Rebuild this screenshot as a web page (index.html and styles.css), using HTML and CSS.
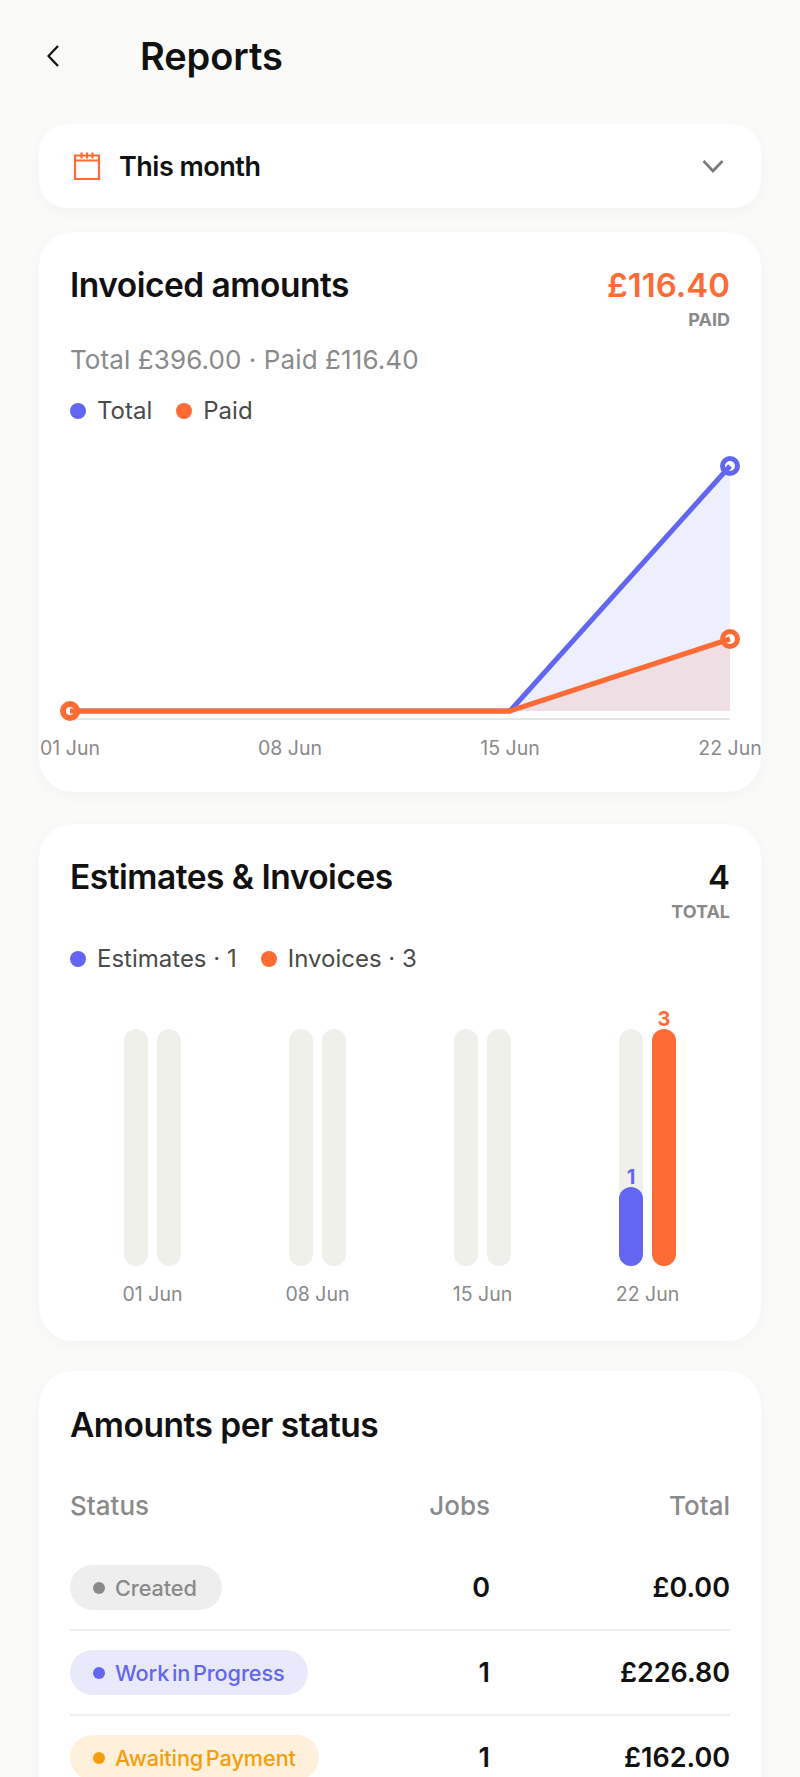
FILE: index.html
```html
<!DOCTYPE html>
<html lang="en">
<head>
    <meta charset="UTF-8">
    <meta name="viewport" content="width=device-width, initial-scale=1.0">
    <title>Reports</title>
    <link rel="stylesheet" href="styles.css">
</head>
<body>
    <div class="page">
        <header class="top-bar">
            <svg class="back-icon" width="12" height="22" viewBox="0 0 12 22">
                <path d="M11 1 1.500 11 11 21" fill="none" stroke="#111" stroke-width="2.200"/>
            </svg>
            <h1>Reports</h1>
        </header>

        <div class="period-select">
            <svg class="calendar-icon" width="28" height="30" viewBox="0 0 28 30">
                <path d="M2 4.500h24V28H2zM2 9.500h24M8.500 1.500v6M14 1.500v6M19.500 1.500v6" fill="none" stroke="#ff6b35" stroke-width="2.200"/>
            </svg>
            <span class="period-label">This month</span>
            <svg class="chevron-icon" width="22" height="14" viewBox="0 0 22 14">
                <path d="M1.500 2 11 12l9.500-10" fill="none" stroke="#7a7a7a" stroke-width="2.600"/>
            </svg>
        </div>

        <section class="card card-invoiced">
            <div class="card-head">
                <h2>Invoiced amounts</h2>
                <div class="head-value">
                    <div class="big-number orange">£116.40</div>
                    <div class="small-caption">PAID</div>
                </div>
            </div>
            <p class="summary">Total £396.00 · Paid £116.40</p>
            <div class="legend">
                <span class="legend-item"><i class="dot blue-bg"></i>Total</span>
                <span class="legend-item"><i class="dot orange-bg"></i>Paid</span>
            </div>
            <svg class="line-chart" width="660" height="314" viewBox="0 0 660 314">
                <path d="M440 277 660 32V277Z" fill="#eeeffd"/>
                <path d="M440 277 660 205V277Z" fill="#efdfe4"/>
                <path d="M0 285H660" stroke="#e6e6e6" stroke-width="2"/>
                <circle cx="660" cy="32" r="7.500" fill="#fff" stroke="#6366f1" stroke-width="5"/>
                <path d="M0 277H440L660 32" fill="none" stroke="#6366f1" stroke-width="5"/>
                <circle cx="0" cy="277" r="7" fill="#fff" stroke="#ff6b35" stroke-width="6"/>
                <circle cx="660" cy="205" r="7.500" fill="#fff" stroke="#ff6b35" stroke-width="5"/>
                <path d="M0 277H440L660 205" fill="none" stroke="#ff6b35" stroke-width="5"/>
                <text x="0" y="321" class="axis-label">01 Jun</text>
                <text x="220" y="321" class="axis-label">08 Jun</text>
                <text x="440" y="321" class="axis-label">15 Jun</text>
                <text x="660" y="321" class="axis-label">22 Jun</text>
            </svg>
        </section>

        <section class="card card-estimates">
            <div class="card-head">
                <h2>Estimates &amp; Invoices</h2>
                <div class="head-value">
                    <div class="big-number">4</div>
                    <div class="small-caption">TOTAL</div>
                </div>
            </div>
            <div class="legend legend-estimates">
                <span class="legend-item"><i class="dot blue-bg"></i>Estimates · 1</span>
                <span class="legend-item"><i class="dot orange-bg"></i>Invoices · 3</span>
            </div>
            <div class="bar-chart">
                <div class="bar-group">
                    <div class="bars"><div class="bar"></div><div class="bar"></div></div>
                    <div class="bar-label">01 Jun</div>
                </div>
                <div class="bar-group">
                    <div class="bars"><div class="bar"></div><div class="bar"></div></div>
                    <div class="bar-label">08 Jun</div>
                </div>
                <div class="bar-group">
                    <div class="bars"><div class="bar"></div><div class="bar"></div></div>
                    <div class="bar-label">15 Jun</div>
                </div>
                <div class="bar-group">
                    <div class="bars">
                        <div class="bar"><div class="bar-fill blue-bg" style="height: 33.3%"><span class="bar-count blue">1</span></div></div>
                        <div class="bar"><div class="bar-fill orange-bg" style="height: 100%"><span class="bar-count orange">3</span></div></div>
                    </div>
                    <div class="bar-label">22 Jun</div>
                </div>
            </div>
        </section>

        <section class="card card-status">
            <h2>Amounts per status</h2>
            <div class="status-row status-head">
                <div>Status</div>
                <div class="col-jobs">Jobs</div>
                <div class="col-total">Total</div>
            </div>
            <div class="status-row">
                <div><span class="pill pill-grey"><i class="pill-dot"></i>Created</span></div>
                <div class="col-jobs">0</div>
                <div class="col-total">£0.00</div>
            </div>
            <div class="status-row">
                <div><span class="pill pill-blue"><i class="pill-dot"></i>Work in Progress</span></div>
                <div class="col-jobs">1</div>
                <div class="col-total">£226.80</div>
            </div>
            <div class="status-row">
                <div><span class="pill pill-amber"><i class="pill-dot"></i>Awaiting Payment</span></div>
                <div class="col-jobs">1</div>
                <div class="col-total">£162.00</div>
            </div>
        </section>
    </div>
</body>
</html>
```

FILE: styles.css
```css
* {
    box-sizing: border-box;
}
html, body {
    margin: 0;
    padding: 0;
}
body {
    font-family: Inter, "Noto Sans", sans-serif;
    background-color: #fafaf8;
    color: #111111;
}
.page {
    height: 1777px;
    overflow: hidden;
    padding: 0 39px;
}
.top-bar {
    display: flex;
    align-items: center;
    height: 124px;
    padding: 0 0 12px 8px;
}
.back-icon {
    margin-right: 81px;
}
h1 {
    margin: 0;
    font-size: 38px;
    font-weight: 600;
    letter-spacing: -0.1px;
}
h2 {
    margin: 0;
    font-size: 33.500px;
    font-weight: 600;
    letter-spacing: -0.5px;
    line-height: 38px;
}
.period-select {
    display: flex;
    align-items: center;
    height: 84px;
    margin-bottom: 24px;
    padding: 0 37px 0 34px;
    background: #ffffff;
    border-radius: 28px;
    box-shadow: 0 4px 16px rgba(0, 0, 0, 0.03);
}
.calendar-icon {
    margin-right: 18px;
}
.period-label {
    flex: 1;
    font-size: 27px;
    font-weight: 600;
    letter-spacing: -0.5px;
}
.card {
    margin-bottom: 32px;
    padding: 34px 31px 0;
    background: #ffffff;
    border-radius: 34px;
    box-shadow: 0 4px 16px rgba(0, 0, 0, 0.03);
}
.card-invoiced {
    height: 560px;
}
.card-estimates {
    height: 517px;
    margin-bottom: 30px;
}
.card-status {
    height: 600px;
    padding-top: 35px;
}
.card-head {
    display: flex;
    justify-content: space-between;
}
.head-value {
    text-align: right;
}
.big-number {
    font-size: 33px;
    font-weight: 600;
    line-height: 38px;
}
.small-caption {
    margin-top: 5px;
    font-size: 18px;
    font-weight: 700;
    line-height: 22px;
    color: #8a8a8a;
}
.orange {
    color: #ff6b35;
}
.blue {
    color: #6366f1;
}
.orange-bg {
    background: #ff6b35;
}
.blue-bg {
    background: #6366f1;
}
.summary {
    margin: 13px 0 0;
    font-size: 26px;
    letter-spacing: 0.1px;
    line-height: 32px;
    color: #8a8a8a;
}
.legend {
    display: flex;
    gap: 24px;
    margin-top: 19px;
    font-size: 24px;
    line-height: 32px;
    color: #4a4a4a;
}
.legend-estimates {
    margin-top: 20px;
}
.legend-item {
    display: flex;
    align-items: center;
}
.dot {
    width: 16px;
    height: 16px;
    margin-right: 11px;
    border-radius: 50%;
}
.line-chart {
    display: block;
    margin-top: 7px;
    overflow: visible;
}
.axis-label {
    font-size: 19.500px;
    fill: #8a8a8a;
    text-anchor: middle;
}
.bar-chart {
    display: grid;
    grid-template-columns: repeat(4, 1fr);
    margin-top: 54px;
}
.bar-group {
    display: flex;
    flex-direction: column;
    align-items: center;
}
.bars {
    display: flex;
    gap: 9px;
    height: 237px;
}
.bar {
    position: relative;
    display: flex;
    align-items: flex-end;
    width: 24px;
    background: #f0f0eb;
    border-radius: 12px;
}
.bar-fill {
    position: relative;
    width: 100%;
    border-radius: 12px;
}
.bar-count {
    position: absolute;
    left: 0;
    right: 0;
    bottom: 100%;
    font-size: 20px;
    font-weight: 700;
    line-height: 20px;
    text-align: center;
}
.bar-label {
    margin-top: 15px;
    font-size: 19.500px;
    line-height: 26px;
    color: #8a8a8a;
}
.status-row {
    display: grid;
    grid-template-columns: 1fr 100px 240px;
    align-items: center;
    height: 85px;
    border-bottom: 2px solid #eeeeee;
    font-size: 27px;
    font-weight: 600;
}
.status-head {
    height: 81px;
    margin-top: 21px;
    border-bottom: none;
    font-size: 26px;
    font-weight: 500;
    color: #8a8a8a;
}
.col-jobs, .col-total {
    text-align: right;
}
.pill {
    display: inline-flex;
    align-items: center;
    height: 45px;
    padding: 0 23px;
    border-radius: 23px;
    font-size: 21.700px;
    font-weight: 500;
    letter-spacing: -0.1px;
    word-spacing: -3px;
}
.pill-dot {
    width: 12px;
    height: 12px;
    margin-right: 10px;
    border-radius: 50%;
    background: currentColor;
}
.pill-grey {
    padding-right: 25px;
    background: #eeeeee;
    color: #8a8a8a;
}
.pill-blue {
    background: #e9e9fc;
    color: #6366f1;
}
.pill-amber {
    background: #fff0dc;
    color: #f59e0b;
}
```
